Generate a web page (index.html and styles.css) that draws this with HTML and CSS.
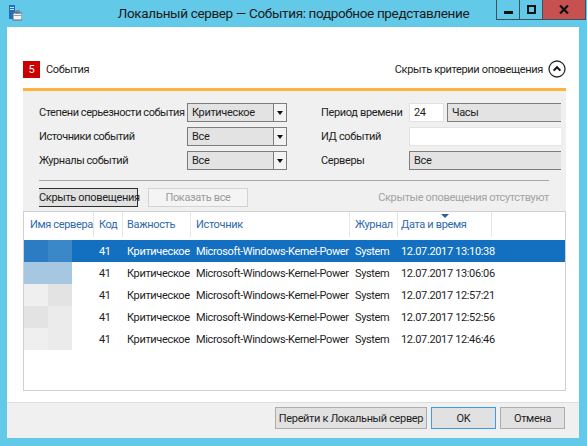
FILE: index.html
```html
<!DOCTYPE html>
<html lang="ru">
<head>
    <meta charset="UTF-8">
    <title>Локальный сервер — События: подробное представление</title>
    <link rel="stylesheet" href="styles.css">
</head>
<body>

<div class="window">
    <div class="titlebar">
        <svg class="app-icon" width="14" height="16" viewBox="0 0 14 16">
            <rect x="1" y="0" width="6" height="14" fill="#1f6fbf"/>
            <rect x="2" y="2" width="4" height="1" fill="#cfe6f7"/>
            <rect x="2" y="4" width="4" height="1" fill="#cfe6f7"/>
            <rect x="5" y="8" width="9" height="7" fill="#f4f4f4" stroke="#5a6a78" stroke-width="1"/>
            <rect x="8" y="6" width="3" height="2" fill="none" stroke="#5a6a78" stroke-width="1"/>
            <rect x="5.5" y="10" width="8" height="1" fill="#8fa3b3"/>
        </svg>
        <div class="title">Локальный сервер — События: подробное представление</div>
        <div class="caption-buttons">
            <div class="caption-btn">
                <svg width="9" height="9" viewBox="0 0 9 9"><rect x="0" y="6" width="9" height="3" fill="#111"/></svg>
            </div>
            <div class="caption-btn">
                <svg width="9" height="9" viewBox="0 0 9 9"><rect x="1" y="1" width="7" height="7" fill="none" stroke="#111" stroke-width="2"/></svg>
            </div>
            <div class="caption-btn close">
                <svg width="10" height="9" viewBox="0 0 10 9"><path d="M1 0.5 L9 8.5 M9 0.5 L1 8.5" stroke="#111" stroke-width="2.2"/></svg>
            </div>
        </div>
    </div>

    <div class="client">
        <div class="content">
            <div class="summary">
                <div class="summary-left">
                    <span class="badge">5</span>
                    <span>События</span>
                </div>
                <div class="summary-right">
                    <span>Скрыть критерии оповещения</span>
                    <svg class="collapse-icon" width="18" height="18" viewBox="0 0 18 18">
                        <circle cx="9" cy="9" r="8" fill="#fff" stroke="#2b2b2b" stroke-width="1.3"/>
                        <path d="M5.6 10.6 L9 7.2 L12.4 10.6" fill="none" stroke="#111" stroke-width="2"/>
                    </svg>
                </div>
            </div>

            <div class="criteria">
                <div class="criteria-inner">
                    <div class="fields">
                        <div class="field-group left">
                            <label>Степени серьезности события</label>
                            <div class="select"><span>Критическое</span><i class="drop"></i></div>
                            <label>Источники событий</label>
                            <div class="select"><span>Все</span><i class="drop"></i></div>
                            <label>Журналы событий</label>
                            <div class="select"><span>Все</span><i class="drop"></i></div>
                        </div>
                        <div class="field-group right">
                            <label>Период времени</label>
                            <div class="period">
                                <div class="textbox short">24</div>
                                <div class="select wide"><span>Часы</span></div>
                            </div>
                            <label>ИД событий</label>
                            <div class="textbox wide"></div>
                            <label>Серверы</label>
                            <div class="select wide"><span>Все</span></div>
                        </div>
                    </div>
                    <div class="separator"></div>
                    <div class="actions">
                        <button class="btn focused">Скрыть оповещения</button>
                        <button class="btn disabled">Показать все</button>
                        <span class="hidden-note">Скрытые оповещения отсутствуют</span>
                    </div>
                </div>
            </div>

            <div class="events">
                <div class="events-head">
                    <div class="col c-server">Имя сервера</div>
                    <div class="col c-code">Код</div>
                    <div class="col c-level">Важность</div>
                    <div class="col c-source">Источник</div>
                    <div class="col c-log">Журнал</div>
                    <div class="col c-date sorted">Дата и время</div>
                    <div class="col c-rest"></div>
                </div>
                <div class="events-body">
                    <div class="row selected">
                        <div class="col c-server"><span class="blur b1"></span><span class="blur b2"></span></div>
                        <div class="col c-code">41</div>
                        <div class="col c-level">Критическое</div>
                        <div class="col c-source">Microsoft-Windows-Kernel-Power</div>
                        <div class="col c-log">System</div>
                        <div class="col c-date">12.07.2017 13:10:38</div>
                    </div>
                    <div class="row">
                        <div class="col c-server"><span class="blur b3"></span><span class="blur b3"></span></div>
                        <div class="col c-code">41</div>
                        <div class="col c-level">Критическое</div>
                        <div class="col c-source">Microsoft-Windows-Kernel-Power</div>
                        <div class="col c-log">System</div>
                        <div class="col c-date">12.07.2017 13:06:06</div>
                    </div>
                    <div class="row">
                        <div class="col c-server"><span class="blur b4"></span><span class="blur b5"></span></div>
                        <div class="col c-code">41</div>
                        <div class="col c-level">Критическое</div>
                        <div class="col c-source">Microsoft-Windows-Kernel-Power</div>
                        <div class="col c-log">System</div>
                        <div class="col c-date">12.07.2017 12:57:21</div>
                    </div>
                    <div class="row">
                        <div class="col c-server"><span class="blur b5"></span><span class="blur b6"></span></div>
                        <div class="col c-code">41</div>
                        <div class="col c-level">Критическое</div>
                        <div class="col c-source">Microsoft-Windows-Kernel-Power</div>
                        <div class="col c-log">System</div>
                        <div class="col c-date">12.07.2017 12:52:56</div>
                    </div>
                    <div class="row">
                        <div class="col c-server"><span class="blur b4"></span><span class="blur b6"></span></div>
                        <div class="col c-code">41</div>
                        <div class="col c-level">Критическое</div>
                        <div class="col c-source">Microsoft-Windows-Kernel-Power</div>
                        <div class="col c-log">System</div>
                        <div class="col c-date">12.07.2017 12:46:46</div>
                    </div>
                </div>
            </div>
        </div>

        <div class="footer">
            <button class="btn dialog goto">Перейти к Локальный сервер</button>
            <button class="btn dialog default">OK</button>
            <button class="btn dialog">Отмена</button>
        </div>
    </div>
</div>

</body>
</html>
```

FILE: styles.css
```css
body {
    margin: 0;
    font-family: Roboto, 'Noto Sans', sans-serif;
    font-size: 11px;
    letter-spacing: -0.35px;
    color: #1e1e1e;
}

.window {
    width: 587px;
    height: 446px;
    background-color: #62c9e9;
    display: flex;
    flex-direction: column;
}

/* title bar */

.titlebar {
    height: 27px;
    display: grid;
    grid-template-columns: 1fr auto 1fr;
    align-items: start;
}

.app-icon {
    margin: 5px 0 0 8px;
}

.title {
    font-size: 13.5px;
    letter-spacing: -0.35px;
    line-height: 26px;
    color: #1a1a1a;
    white-space: nowrap;
}

.caption-buttons {
    justify-self: end;
    display: flex;
    margin-right: 1px;
}

.caption-btn {
    width: 22px;
    height: 19px;
    border-left: 1px solid #3e5058;
    border-bottom: 1px solid #3e5058;
    display: flex;
    align-items: center;
    justify-content: center;
}

.caption-btn.close {
    width: 42px;
    background-color: #c75050;
    border-right: 1px solid #3e5058;
}

/* client area */

.client {
    flex: 1;
    margin: 0 8px 8px 7px;
    background-color: #fff;
    display: flex;
    flex-direction: column;
}

.content {
    flex: 1;
    padding: 33px 13px 0 16px;
}

.summary {
    height: 18px;
    display: flex;
    align-items: center;
    justify-content: space-between;
}

.summary-left,
.summary-right {
    display: flex;
    align-items: center;
}

.badge {
    width: 17px;
    height: 17px;
    line-height: 17px;
    text-align: center;
    background-color: #cc0000;
    color: #fff;
    margin-right: 6px;
}

.collapse-icon {
    margin-left: 5px;
}

/* alert criteria */

.criteria {
    margin-top: 10px;
    border-top: 3px solid #ffb23e;
    background-color: #f0f0f0;
    padding: 12px 5px 4px 16px;
}

.criteria-inner {
    overflow: hidden;
}

.fields {
    display: flex;
}

.field-group {
    display: grid;
    row-gap: 5px;
    align-items: center;
}

.field-group.left {
    grid-template-columns: 148px 100px;
}

.field-group.right {
    margin-left: 34px;
    grid-template-columns: 88px 170px;
}

.field-group label {
    line-height: 19px;
    white-space: nowrap;
}

.field-group.left label {
    letter-spacing: -0.45px;
}

.select {
    height: 17px;
    border: 1px solid #7d7d7d;
    background-color: #e3e3e3;
    display: flex;
    align-items: center;
    padding-left: 4px;
}

.select span {
    flex: 1;
}

.drop {
    width: 12px;
    height: 17px;
    border-left: 1px solid #7d7d7d;
    background-color: #f3f3f3;
    display: flex;
    align-items: center;
    justify-content: center;
}

.drop::after {
    content: '';
    border-left: 3px solid transparent;
    border-right: 3px solid transparent;
    border-top: 4px solid #111;
}

.textbox {
    height: 17px;
    line-height: 17px;
    border: 1px solid #e2e2e2;
    background-color: #fff;
    padding-left: 4px;
}

.period {
    display: flex;
    gap: 3px;
}

.textbox.short {
    width: 29px;
}

.period .select {
    flex: 1;
}

.separator {
    height: 1px;
    background-color: #a7a7a7;
    margin: 10px 12px 0 -1px;
}

.actions {
    display: flex;
    align-items: center;
    gap: 10px;
    margin: 7px 12px 0 -1px;
}

.btn {
    font-family: inherit;
    font-size: 11px;
    letter-spacing: -0.35px;
    white-space: nowrap;
    height: 19px;
    width: 100px;
    padding: 0;
    border: 1px solid #adadad;
    background-color: #e1e1e1;
    color: #1e1e1e;
}

.btn.focused {
    border-color: #2f2f2f;
}

.btn.disabled {
    border-color: #d2d2d2;
    background-color: #f4f4f4;
    color: #9a9a9a;
}

.hidden-note {
    margin-left: auto;
    color: #a3a3a3;
}

/* events list */

.events {
    height: 178px;
    border: 1px solid #d0d0d0;
    overflow: hidden;
}

.events-head {
    height: 25px;
    display: flex;
    margin-bottom: 3px;
}

.events-head .col {
    color: #2f68ad;
    line-height: 25px;
    border-right: 1px solid #e6e6e6;
}

.events-head .c-rest {
    border-right: none;
}

.col {
    padding-left: 5px;
    white-space: nowrap;
    overflow: hidden;
    box-sizing: border-box;
}

.c-server { width: 70px; padding-left: 6px; }
.c-code { width: 29px; }
.c-level { width: 68px; padding-left: 4px; }
.c-source { width: 159px; }
.c-log { width: 48px; }
.c-date { width: 94px; padding-left: 3px; }
.c-rest { flex: 1; }

.row .c-date {
    overflow: visible;
}

.sorted {
    position: relative;
}

.sorted::before {
    content: '';
    position: absolute;
    top: 2px;
    left: 43px;
    border-left: 4px solid transparent;
    border-right: 4px solid transparent;
    border-top: 4px solid #2a5f9e;
}

.row {
    height: 22px;
    display: flex;
    align-items: center;
}

.row.selected {
    background-color: #136fbf;
    color: #fff;
}

.row .c-server {
    padding: 0;
    height: 22px;
    display: flex;
}

.blur {
    width: 24px;
    height: 22px;
}

.b1 { background-color: #2b7cc3; }
.b2 { background-color: #3b88c9; }
.b3 { background-color: #a5c7e2; }
.b4 { background-color: #efefef; }
.b5 { background-color: #e3e3e3; }
.b6 { background-color: #ebebeb; }

/* dialog footer */

.footer {
    height: 36px;
    box-sizing: border-box;
    border-top: 1px solid #dedede;
    background-color: #f0f0f0;
    display: flex;
    justify-content: flex-end;
    align-items: flex-start;
    gap: 4px;
    padding: 4px 14px 0 0;
}

.btn.dialog {
    height: 22px;
    width: 65px;
}

.btn.goto {
    width: 152px;
}

.btn.default {
    border-color: #3c9be4;
}
```
